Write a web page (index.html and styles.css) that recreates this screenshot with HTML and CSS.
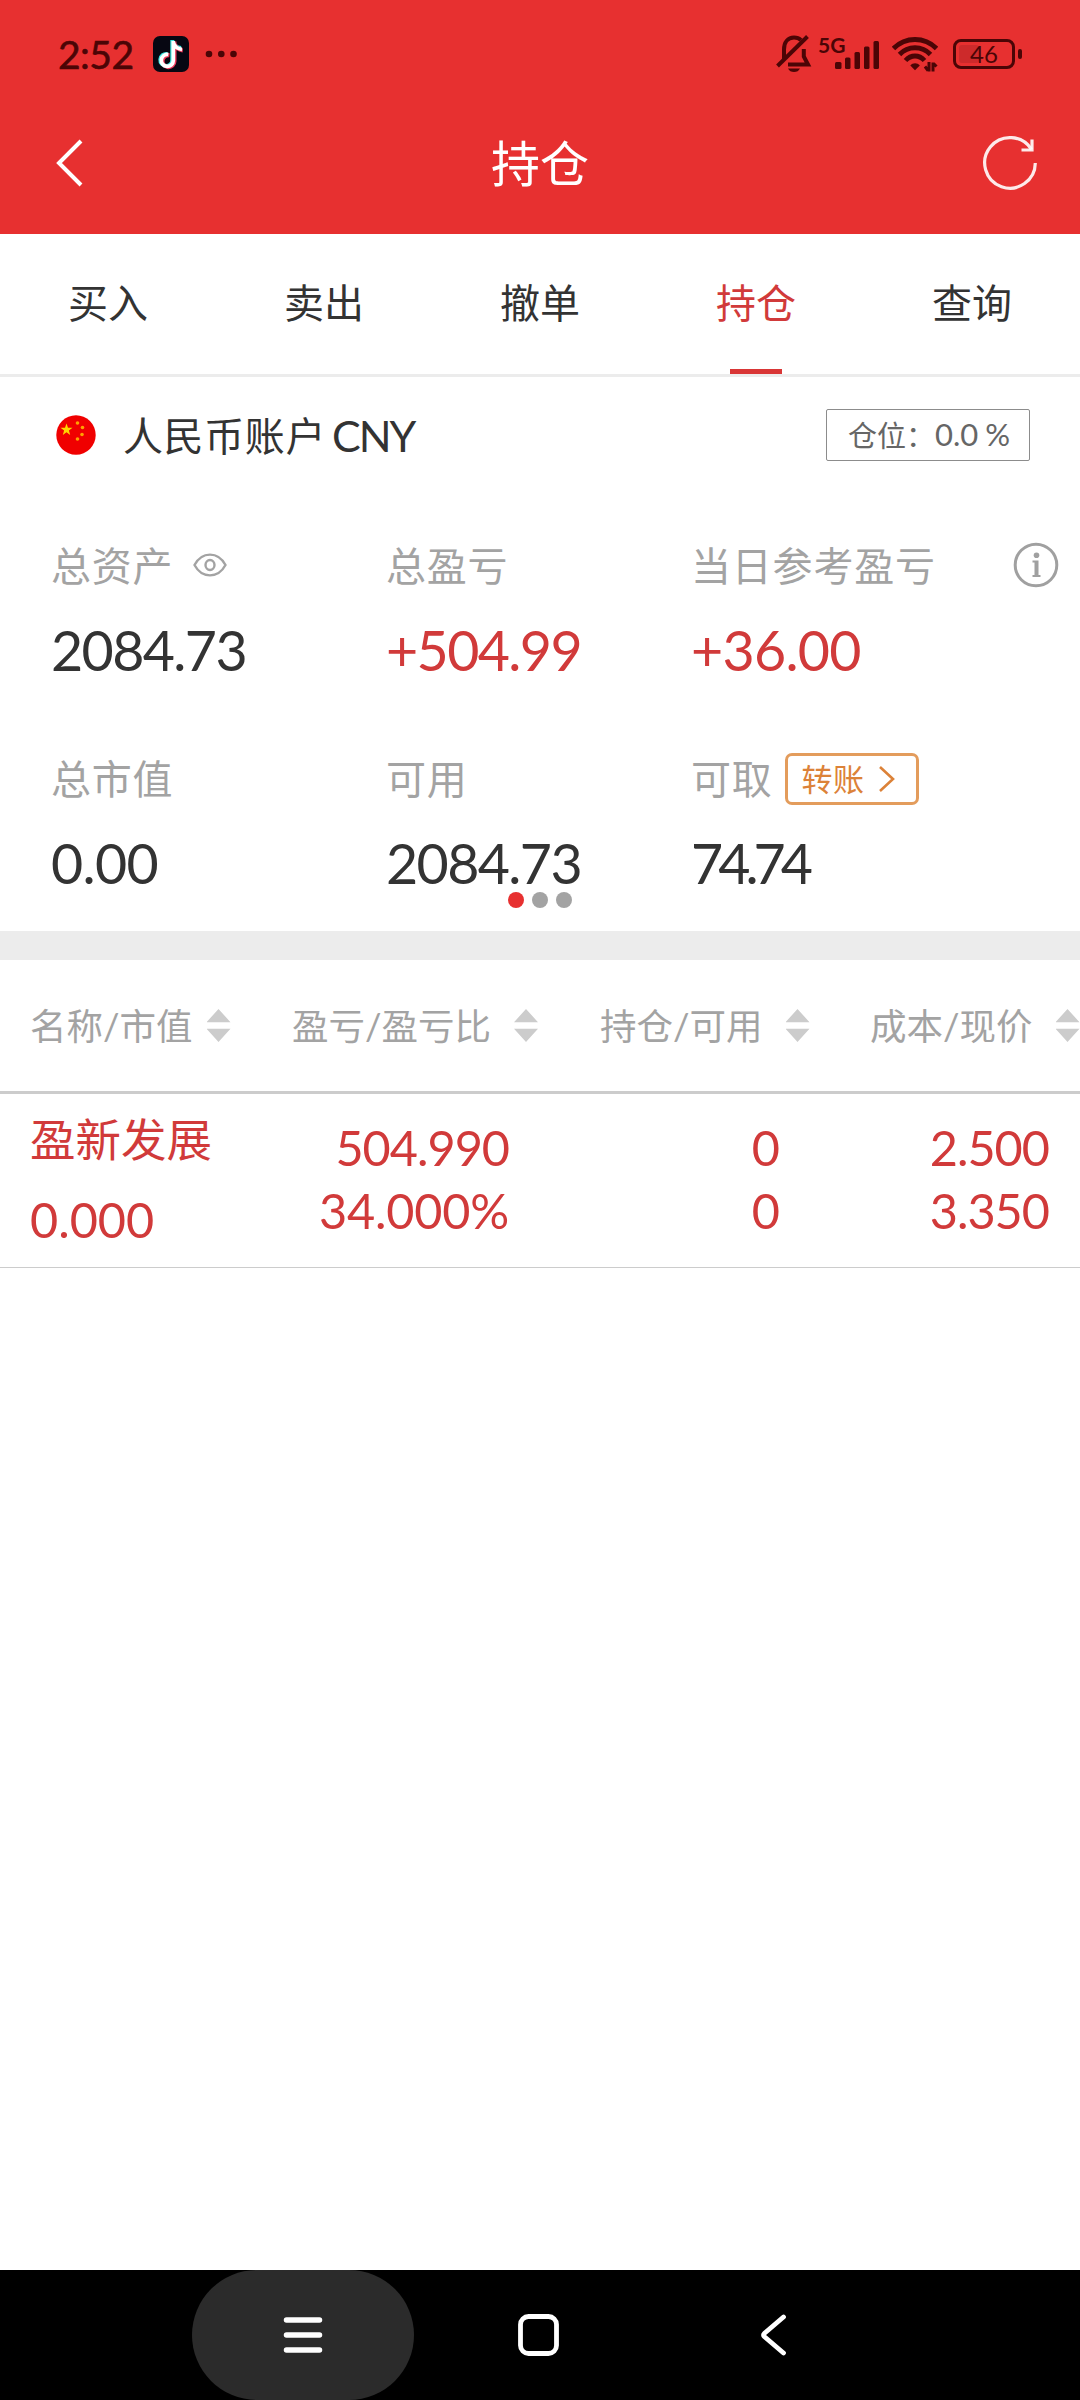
FILE: index.html
```html
<!DOCTYPE html>
<html lang="zh-CN">
<head>
<meta charset="utf-8">
<title>持仓</title>
<link rel="stylesheet" href="styles.css">
</head>
<body>
<div class="screen">
  <header class="top">
    <div class="status">
      <span class="clock">2:52</span>
      <svg class="app-icon" width="36" height="36" viewBox="0 0 36 36">
        <rect width="36" height="36" rx="7" fill="#070712"/>
        <g fill="none" stroke-width="4">
          <path d="M19.300 4V23.500a6 6 0 1 1-5-5.500M19.300 5.500c1.500 4 4.500 6 8.700 6.500" stroke="#3fe6e2"/>
          <path d="M21.500 5.500V25.300a6 6 0 1 1-5-6M21.500 7.500c1.300 4 4.300 6.500 8.300 7" stroke="#ee3a5c"/>
          <path d="M20.300 5V24.500a6 6 0 1 1-5-6M20.300 6.500c1.300 4 4.500 6.500 8.700 6.800" stroke="#fff" stroke-width="3.700"/>
        </g>
      </svg>
      <svg class="more" width="32" height="8" viewBox="0 0 32 8" fill="#4b0506"><circle cx="4" cy="4" r="3.300"/><circle cx="16.300" cy="4" r="3.300"/><circle cx="28.500" cy="4" r="3.300"/></svg>
      <svg class="bell" width="36" height="40" viewBox="0 0 36 40">
        <g fill="none" stroke="#4b0506" stroke-width="4">
          <path d="M8 25V15.500C8 8 12 3.500 18 3.500c3 0 5.300 1 7 2.700"/>
          <path d="M27.800 15V22.500L32 30.500H12"/>
          <path d="M1.500 32 31.500 2.500"/>
        </g>
        <path d="M12 34.500h12c-1.200 2.400-3.200 3.500-6 3.500s-4.800-1.100-6-3.500z" fill="#4b0506"/>
      </svg>
      <span class="net">5G</span>
      <svg class="signal" width="45" height="28" viewBox="0 0 45 28" fill="#4b0506">
        <rect x="0" y="21" width="6.500" height="7" rx="1.500"/><rect x="10" y="16.500" width="5.500" height="11.500" rx="1.500"/><rect x="19.500" y="11" width="5.500" height="17" rx="1.500"/><rect x="29" y="5.500" width="5.500" height="22.500" rx="1.500"/><rect x="38.500" y="0" width="5.500" height="28" rx="1.500"/>
      </svg>
      <svg class="wifi" width="46" height="36" viewBox="0 0 46 36">
        <g fill="none" stroke="#4b0506" stroke-width="4.800">
          <path d="M1.500 12.500C13.500.500 32.500.500 44.500 12.500"/>
          <path d="M7.500 18.500C16 9.500 30 9.500 38.500 18.500"/>
          <path d="M13.500 24.500C19 18.500 27 18.500 32.500 24.500"/>
        </g>
        <path d="M18.300 29.500c2.500-3 7-3 9.500 0l-4.800 4.700z" fill="#4b0506"/>
        <path d="M37 26v9.500M33 30.500l3 4M41 35.500v-9M41.500 27.500l3 3" stroke="#4b0506" stroke-width="3" fill="none"/>
      </svg>
      <span class="battery"><i class="charge"></i><span class="pct">46</span></span><i class="nub"></i>
    </div>
    <div class="titlebar">
      <svg width="28" height="50" viewBox="0 0 28 50"><path d="M25 3 3 25 25 47" fill="none" stroke="#fff" stroke-width="4"/></svg>
      <h1>持仓</h1>
      <svg width="56" height="56" viewBox="0 0 56 56" fill="none" stroke="#fff" stroke-opacity=".9" stroke-width="3.200"><path d="M53.300 28A25.300 25.300 0 1 1 49.500 14.500"/><path d="M39.500 15H50V4.500"/></svg>
    </div>
  </header>

  <nav class="tabs">
    <a>买入</a><a>卖出</a><a>撤单</a><a class="active">持仓</a><a>查询</a>
  </nav>

  <section class="account">
    <svg class="flag" width="40" height="40" viewBox="0 0 40 40"><circle cx="20" cy="20" r="19.700" fill="#f00000"/>
      <path d="M10.500 8.500l1.500 4.300h4.500l-3.600 2.700 1.300 4.400-3.700-2.600-3.700 2.600 1.300-4.400-3.600-2.700H9z" fill="#ffd500"/>
      <g fill="#ffa200"><circle cx="21.500" cy="8" r="1.800"/><circle cx="26.500" cy="12.500" r="1.800"/><circle cx="26" cy="19.500" r="1.800"/><circle cx="21.500" cy="24" r="1.800"/></g></svg>
    <span class="account-name">人民币账户</span><span class="currency">CNY</span>
    <span class="position"><span>仓位：</span><b>0.0</b><b class="percent">%</b></span>
  </section>

  <section class="assets">
    <div class="asset"><div class="label">总资产
      <svg class="eye" width="34" height="26" viewBox="0 0 34 26" fill="none" stroke="#a3a3a3" stroke-width="2.400"><path d="M1.500 13C9-.8 25-.8 32.500 13 25 26.800 9 26.800 1.500 13z"/><ellipse cx="17" cy="13" rx="4.500" ry="5"/></svg></div>
      <div class="value">2084.73</div></div>
    <div class="asset"><div class="label">总盈亏</div><div class="value up">+504.99</div></div>
    <div class="asset"><div class="label">当日参考盈亏
      <svg class="info" width="46" height="46" viewBox="0 0 46 46"><circle cx="23" cy="23" r="20.800" fill="none" stroke="#a0a0a0" stroke-width="3"/><circle cx="23.500" cy="13.300" r="2.800" fill="#a0a0a0"/><path d="M19.500 18.500h6V33h2v2h-8v-2h2V20.500h-2z" fill="#a0a0a0"/></svg></div>
      <div class="value up loose">+36.00</div></div>
    <div class="asset"><div class="label">总市值</div><div class="value loose">0.00</div></div>
    <div class="asset"><div class="label">可用</div><div class="value">2084.73</div></div>
    <div class="asset"><div class="label">可取
      <span class="transfer"><span>转账</span><svg width="18" height="28" viewBox="0 0 18 28"><path d="M2 2 15 14 2 26" fill="none" stroke="#dc8238" stroke-width="2.600"/></svg></span></div>
      <div class="value tight">74.74</div></div>
    <div class="dots"><i class="on"></i><i></i><i></i></div>
  </section>

  <section class="holdings">
    <div class="thead">
      <span>名称/市值<i class="sort"></i></span>
      <span>盈亏/盈亏比<i class="sort"></i></span>
      <span>持仓/可用<i class="sort"></i></span>
      <span>成本/现价<i class="sort"></i></span>
    </div>
    <div class="row">
      <div class="stock"><div class="stock-name">盈新发展</div><div class="num">0.000</div></div>
      <div class="cell"><div class="num">504.990</div><div class="num rate">34.000%</div></div>
      <div class="cell"><div class="num">0</div><div class="num">0</div></div>
      <div class="cell"><div class="num">2.500</div><div class="num">3.350</div></div>
    </div>
  </section>

  <footer class="sysnav">
    <span class="pill"><svg width="40" height="38" viewBox="0 0 40 38"><path d="M3.500 4h33M3.500 19h33M3.500 34h33" stroke="#fff" stroke-width="5.500" stroke-linecap="round"/></svg></span>
    <svg class="home" width="41" height="42" viewBox="0 0 41 42"><rect x="2.500" y="2.500" width="36" height="37" rx="8" fill="none" stroke="#fff" stroke-width="4.800"/></svg>
    <svg class="back" width="27" height="42" viewBox="0 0 27 42"><path d="M23.500 3 4.500 19.200q-2 1.800 0 3.600L23.500 39" fill="none" stroke="#fff" stroke-width="4.800" stroke-linecap="round"/></svg>
  </footer>
</div>
</body>
</html>
```
FILE: styles.css
```css
* { box-sizing: border-box; }
body {
  margin: 0;
  background: #fff;
  color: #333;
  font-family: Lato, "Noto Sans CJK SC", sans-serif;
}
svg { display: block; flex: none; }
i { font-style: normal; }
.screen { width: 1080px; height: 2400px; display: flex; flex-direction: column; overflow: hidden; }

/* status and title bars */
.top { height: 234px; background: #e73030; }
.status { height: 108px; display: flex; align-items: center; padding-left: 58px; color: #4b0506; }
.clock { width: 95px; font-size: 39px; line-height: 48px; letter-spacing: -0.5px; -webkit-text-stroke: 0.6px #4b0506; }
.more { margin-left: 16px; }
.bell { margin-left: 539px; }
.net { width: 23px; margin-left: 6px; font-size: 21px; font-weight: 700; line-height: 24px; margin-bottom: 18px; }
.signal { margin-top: 1px; margin-left: -6px; }
.wifi { margin-left: 12px; }
.battery { width: 62px; height: 30px; margin-left: 15px; border: 3px solid #4b0506; border-radius: 8px; padding: 3px; display: grid; align-items: center; }
.charge { grid-area: 1 / 1; width: 20px; height: 18px; border-radius: 3px; background: #cd2a2b; }
.pct { grid-area: 1 / 1; text-align: center; font-size: 24px; line-height: 18px; }
.nub { width: 4px; height: 10px; margin-left: 3px; border-radius: 2px; background: #4b0506; }
.titlebar { height: 110px; display: flex; align-items: center; justify-content: space-between; padding: 0 42px 0 56px; color: #fff; }
h1 { margin: 0 0 0 14px; font-size: 49px; font-weight: 400; line-height: 72px; }

/* tabs */
.tabs { height: 143px; display: flex; border-bottom: 3px solid #ececec; }
.tabs a { flex: 1; display: flex; justify-content: center; font-size: 40px; line-height: 138px; position: relative; }
.tabs .active { color: #d13a3a; }
.tabs .active::after { content: ""; position: absolute; bottom: 0; left: 82px; width: 52px; height: 5px; background: #d93636; }

/* account */
.account { height: 116px; display: flex; align-items: center; padding: 0 50px 0 56px; }
.account-name { margin-left: 27px; padding-bottom: 3px; font-size: 40px; letter-spacing: 0.6px; }
.currency { margin-left: 6px; font-size: 43px; letter-spacing: -2px; }
.position { width: 204px; height: 52px; margin-left: auto; padding: 0 0 2px 21px; border: 1px solid #8c8c8c; border-radius: 2px; display: flex; align-items: center; color: #666; font-size: 29px; }
.position b { font-size: 31px; font-weight: 400; }
.position .percent { margin-left: 7px; }

/* asset summary */
.assets { height: 438px; padding: 39px 0 0 51px; display: grid; grid-template-columns: 335px 305px 1fr; grid-template-rows: 213px 213px; position: relative; }
.label { height: 66px; padding-bottom: 3px; display: flex; align-items: center; color: #a3a3a3; font-size: 40px; letter-spacing: 0.8px; }
.eye { margin: 3px 0 0 20px; }
.info { margin: 3px 21px 0 auto; }
.value { height: 104px; line-height: 104px; font-size: 55.5px; letter-spacing: -1.6px; }
.loose { letter-spacing: -0.7px; }
.tight { letter-spacing: -5px; }
.up, .row { color: #d13a3a; }
.transfer { width: 134px; height: 52px; margin: 4px 0 0 12px; padding: 0 20px 0 14px; border: 3px solid #e39c5c; border-radius: 7px; display: flex; align-items: center; justify-content: space-between; color: #dc8238; font-size: 31px; letter-spacing: 0.5px; }
.transfer span { padding-bottom: 2px; }
.dots { position: absolute; left: 508px; top: 399px; display: flex; gap: 8px; }
.dots i { width: 16px; height: 16px; border-radius: 50%; background: #a3a3a3; }
.dots .on { background: #e73030; }

/* holdings table */
.holdings { border-top: 29px solid #ececec; flex: 1; }
.thead { height: 134px; border-bottom: 3px solid #ccc; padding: 0 0 3px 30px; display: grid; grid-template-columns: 262px 308px 270px 1fr; color: #a3a3a3; font-size: 36.5px; }
.thead span { display: flex; align-items: center; white-space: nowrap; }
.sort { width: 24px; height: 33px; margin: 3px 0 0 14px; flex: none; background: #ccc; clip-path: polygon(50% 0, 100% 40%, 0 40%, 0 60%, 100% 60%, 50% 100%, 0 60%, 0 40%); }
.thead span:nth-child(n+2) .sort { margin-left: 23px; }
.row { height: 174px; border-bottom: 1px solid #ccc; display: grid; grid-template-columns: 262px 217px 270px 270px; padding-left: 30px; }
.num { font-size: 48.6px; letter-spacing: -1px; line-height: 63px; }
.rate { letter-spacing: -0.2px; }
.stock-name { font-size: 45.5px; line-height: 66px; margin-top: 13px; }
.stock .num { margin-top: 15px; letter-spacing: 0; }
.cell { text-align: right; padding-top: 22px; }

/* system navigation */
.sysnav { height: 130px; background: #000; display: flex; align-items: center; padding-left: 192px; }
.pill { width: 222px; height: 130px; border-radius: 65px; background: #2b2b2b; display: flex; align-items: center; justify-content: center; }
.home { margin-left: 104px; }
.back { margin-left: 201px; }
```
